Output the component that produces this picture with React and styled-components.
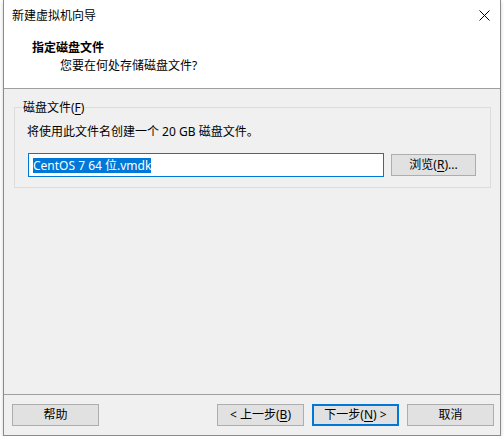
import styled, { createGlobalStyle } from "styled-components";

const Global = createGlobalStyle`
  html, body {
    margin: 0;
    padding: 0;
    background: #ffffff;
  }
  body {
    font-family: "Segoe UI", "Noto Sans", "Noto Sans CJK SC", sans-serif;
    font-size: 12px;
    color: #000;
  }
`;

const Window = styled.div`
  margin-left: 3px;
  width: 498px;
  height: 436px;
  box-sizing: border-box;
  border: 1px solid #8a8a8a;
  border-top: none;
  background: #f0f0f0;
  display: flex;
  flex-direction: column;
  box-shadow: 0 2px 4px rgba(0, 0, 0, 0.18);
`;

const TitleBar = styled.div`
  height: 31px;
  flex: none;
  background: #fff;
  display: flex;
  align-items: center;
  justify-content: space-between;
  padding: 0 10px 0 8px;
`;

const Title = styled.span`
  line-height: 16px;
`;

const Header = styled.div`
  height: 58px;
  flex: none;
  background: #fff;
  border-bottom: 1px solid #a0a0a0;
  padding-left: 28px;
  display: flex;
  flex-direction: column;
  box-sizing: border-box;
  padding-top: 8px;
`;

const HeaderTitle = styled.div`
  font-weight: bold;
  line-height: 18px;
`;

const HeaderSub = styled.div`
  margin-left: 28px;
  line-height: 18px;
`;

const Body = styled.div`
  flex: 1;
  padding: 10px 9px 0 10px;
`;

const Group = styled.fieldset`
  margin: 0;
  border: 1px solid #dcdcdc;
  padding: 0 0 11px 12px;
  height: 89px;
  box-sizing: border-box;
`;

const Legend = styled.legend`
  padding: 0 1px;
  margin-left: -5px;
  line-height: 17px;
`;

const Info = styled.div`
  line-height: 16px;
  margin-top: 8px;
`;

const Row = styled.div`
  display: flex;
  align-items: center;
  margin-top: 13px;
  margin-left: 1px;
`;

const PathBox = styled.div`
  flex: none;
  width: 356px;
  height: 24px;
  box-sizing: border-box;
  border: 1px solid #0078d7;
  background: #fff;
  display: flex;
  align-items: center;
  padding-left: 4px;
`;

const Selected = styled.span`
  background: #0078d7;
  color: #fff;
  line-height: 15px;
`;

const Button = styled.div`
  flex: none;
  width: ${(p) => p.$w || 87}px;
  height: 22px;
  box-sizing: border-box;
  background: #e1e1e1;
  border: ${(p) => (p.$primary ? "2px solid #0078d7" : "1px solid #adadad")};
  display: flex;
  align-items: center;
  justify-content: center;
  margin-left: ${(p) => p.$ml || 0}px;
  line-height: 16px;
`;

const Footer = styled.div`
  height: 41px;
  flex: none;
  border-top: 1px solid #a0a0a0;
  box-sizing: border-box;
  display: flex;
  align-items: flex-start;
  padding: 9px 6px 0 8px;
`;

const Spacer = styled.div`
  flex: 1;
`;

const Key = styled.span`
  text-decoration: underline;
  text-underline-offset: 2px;
`;

const Close = () => (
  <svg width="11" height="11" viewBox="0 0 11 11">
    <path d="M0.5 0.5 L10.5 10.5 M10.5 0.5 L0.5 10.5" stroke="#000" strokeWidth="1" />
  </svg>
);

export default function App() {
  return (
    <>
      <Global />
      <Window>
        <TitleBar>
          <Title>新建虚拟机向导</Title>
          <Close />
        </TitleBar>
        <Header>
          <HeaderTitle>指定磁盘文件</HeaderTitle>
          <HeaderSub>您要在何处存储磁盘文件?</HeaderSub>
        </Header>
        <Body>
          <Group>
            <Legend>
              磁盘文件(<Key>F</Key>)
            </Legend>
            <Info>将使用此文件名创建一个 20 GB 磁盘文件。</Info>
            <Row>
              <PathBox>
                <Selected>CentOS 7 64 位.vmdk</Selected>
              </PathBox>
              <Button $w={85} $ml={7}>
                浏览(<Key>R</Key>)...
              </Button>
            </Row>
          </Group>
        </Body>
        <Footer>
          <Button>帮助</Button>
          <Spacer />
          <Button>
            &lt; 上一步(<Key>B</Key>)
          </Button>
          <Button $primary $ml={8}>
            下一步(<Key>N</Key>) &gt;
          </Button>
          <Button $ml={8}>取消</Button>
        </Footer>
      </Window>
    </>
  );
}
